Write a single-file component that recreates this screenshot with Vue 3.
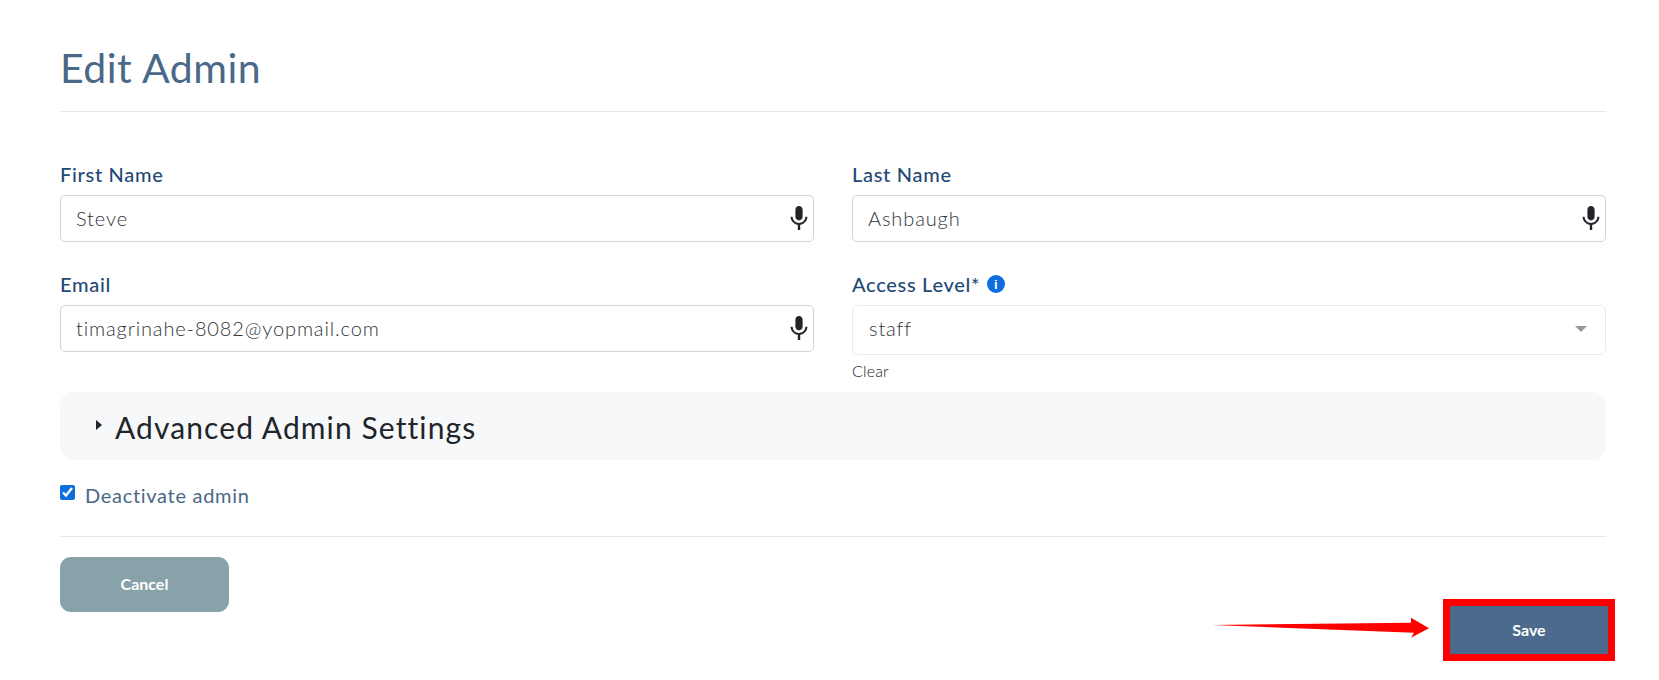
<script setup>
const micPath = 'M12 14c1.66 0 3-1.34 3-3V5c0-1.66-1.34-3-3-3S9 3.34 9 5v6c0 1.66 1.34 3 3 3zm5.3-3c0 3-2.54 5.1-5.3 5.1S6.7 14 6.7 11H5c0 3.41 2.72 6.23 6 6.72V22h2v-4.28c3.28-.48 6-3.3 6-6.72h-1.7z'
</script>

<template>
  <div class="page">
    <h1 class="title">Edit Admin</h1>
    <form class="form" @submit.prevent>
      <div class="grid">
        <div class="field">
          <label>First Name</label>
          <div class="input">
            <span>Steve</span>
            <svg class="mic" viewBox="5 2 14 20"><path :d="micPath" /></svg>
          </div>
        </div>
        <div class="field">
          <label>Last Name</label>
          <div class="input">
            <span>Ashbaugh</span>
            <svg class="mic" viewBox="5 2 14 20"><path :d="micPath" /></svg>
          </div>
        </div>
        <div class="field">
          <label>Email</label>
          <div class="input">
            <span>timagrinahe-8082@yopmail.com</span>
            <svg class="mic" viewBox="5 2 14 20"><path :d="micPath" /></svg>
          </div>
        </div>
        <div class="field">
          <label>Access Level* <span class="info">i</span></label>
          <div class="select">
            <span>staff</span>
            <i class="caret"></i>
          </div>
          <a class="clear">Clear</a>
        </div>
      </div>

      <div class="advanced">
        <i class="tri"></i>
        <span>Advanced Admin Settings</span>
      </div>

      <label class="check">
        <input type="checkbox" checked />
        <span>Deactivate admin</span>
      </label>

      <div class="footer">
        <button class="btn cancel">Cancel</button>
        <button class="btn save">Save</button>
      </div>
    </form>
    <svg class="arrow" width="220" height="22" viewBox="0 0 220 22">
      <polygon points="0,8 199,5.700 199,0.700 217,11.300 199,20.700 202,15.700" fill="#ff0000" />
    </svg>
  </div>
</template>

<style scoped>
* {
  box-sizing: border-box;
  font-family: Lato, "Noto Sans", sans-serif;
}
.page {
  position: relative;
  height: 680px;
  padding: 0 53px 0 60px;
  background: #fff;
  overflow: hidden;
}
.title {
  margin: 0;
  padding: 43px 0 18px;
  font-size: 41px;
  line-height: 50px;
  font-weight: 400;
  letter-spacing: 0.5px;
  color: #4a6888;
  border-bottom: 1px solid #e6e8ea;
}
.form {
  padding-top: 48px;
}
.grid {
  display: grid;
  grid-template-columns: 754px 754px;
  column-gap: 38px;
}
.field {
  min-height: 110px;
}
.field label {
  display: flex;
  align-items: center;
  gap: 7px;
  height: 35px;
  padding-bottom: 7px;
  font-size: 20px;
  font-weight: 500;
  color: #1f4a75;
  letter-spacing: 0.7px;
}
.input {
  display: flex;
  justify-content: space-between;
  align-items: center;
  height: 47px;
  padding: 0 5px 0 15px;
  border: 1px solid #ced4da;
  border-radius: 5px;
  font-size: 20px;
  font-weight: 300;
  color: #2f3439;
  letter-spacing: 0.88px;
}
.input span {
  margin-top: -2px;
}
.mic {
  width: 18px;
  height: 24px;
  margin-top: -2px;
  fill: #212529;
}
.info {
  display: inline-flex;
  align-items: center;
  justify-content: center;
  width: 18px;
  height: 18px;
  border-radius: 50%;
  background: #0d6fde;
  color: #fff;
  font-size: 13px;
  font-weight: 900;
  font-family: "Liberation Sans", sans-serif;
}
.select {
  display: flex;
  justify-content: space-between;
  align-items: center;
  height: 50px;
  padding: 0 18px 0 16px;
  border: 1px solid #e8eaec;
  border-radius: 6px;
  font-size: 20px;
  font-weight: 300;
  color: #2f3439;
  letter-spacing: 0.88px;
}
.select span {
  margin-top: -5px;
}
.caret {
  width: 0;
  height: 0;
  margin-top: -3px;
  border-left: 6px solid transparent;
  border-right: 6px solid transparent;
  border-top: 6px solid #999;
}
.clear {
  display: block;
  margin-top: 7px;
  font-size: 16px;
  font-weight: 300;
  line-height: 18px;
  letter-spacing: 0.15px;
  color: #222;
}
.advanced {
  display: flex;
  align-items: center;
  gap: 13px;
  height: 68px;
  margin-top: 12px;
  padding: 2px 0 0 36px;
  border-radius: 14px;
  background: #f7f8fa;
  font-size: 30px;
  color: #212529;
  letter-spacing: 1.1px;
}
.tri {
  width: 0;
  height: 0;
  margin-top: -4px;
  border-top: 5px solid transparent;
  border-bottom: 5px solid transparent;
  border-left: 6px solid #212529;
}
.check {
  display: flex;
  align-items: center;
  gap: 10px;
  height: 77px;
  padding-bottom: 6px;
  border-bottom: 1px solid #e6e8ea;
  font-size: 20px;
  font-weight: 400;
  color: #4a6888;
  letter-spacing: 0.7px;
}
.check input {
  width: 15px;
  height: 15px;
  margin: 0;
  accent-color: #0d6fde;
  transform: translateY(-3px);
}
.footer {
  display: flex;
  justify-content: space-between;
  align-items: flex-start;
  padding-top: 20px;
}
.btn {
  border: 0;
  padding: 0 0 2px;
  color: #fff;
  font-size: 16px;
  font-weight: 700;
}
.cancel {
  width: 169px;
  height: 55px;
  border-radius: 11px;
  background: #87a2a8;
}
.save {
  width: 158px;
  height: 48px;
  margin-top: 49px;
  margin-right: -2px;
  background: #4c6a8b;
  outline: 7px solid #ff0000;
}
.arrow {
  position: absolute;
  left: 1212px;
  top: 617px;
}
</style>

<style>
html, body {
  margin: 0;
  background: #fff;
}
</style>
